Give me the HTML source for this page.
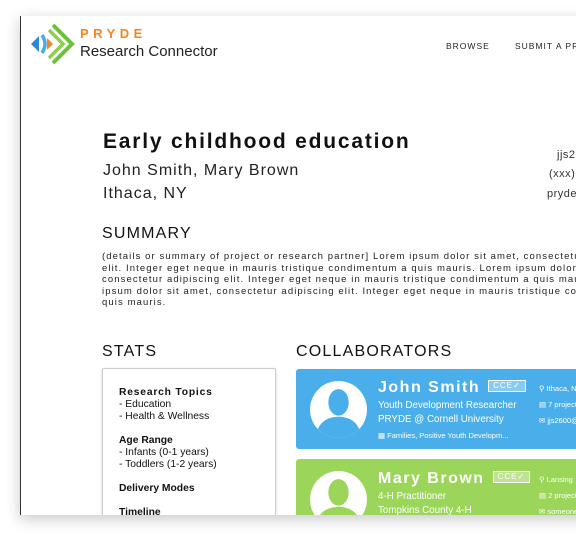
<!DOCTYPE html>
<html><head><meta charset="utf-8"><style>
*{margin:0;padding:0;box-sizing:border-box}
body{width:576px;height:540px;overflow:hidden;background:#fff;font-family:"Liberation Sans",sans-serif;position:relative;color:#111}
.frame{position:absolute;left:20px;top:16px;width:580px;height:499px;background:#fff;border-left:1.5px solid #333;box-shadow:0 4px 14px rgba(0,0,0,.22);overflow:hidden}
.a{position:absolute;white-space:nowrap}
.card{position:absolute;left:275px;width:320px;border-radius:3px;color:#fff}
.av{position:absolute;left:14px;width:57px;height:57px;border-radius:50%;background:#fff;overflow:hidden}
.badge{display:inline-block;font-size:8px;line-height:10px;border:1px solid #fff;background:rgba(255,255,255,.35);padding:0 4px;vertical-align:middle;margin-left:8px;letter-spacing:1px;font-weight:normal;position:relative;top:-2px}
</style></head><body>
<div class="frame">
<svg class="a" style="left:9px;top:7px" width="46" height="44" viewBox="0 0 46 44">
<polygon points="1,21 9,13 9,29" fill="#2f86d6"/>
<path d="M12,12 Q18,21 12,30" stroke="#4aa8e6" stroke-width="3.5" fill="none"/>
<polygon points="17,15 23,21 17,27" fill="#f7841e"/>
<path d="M19,7 L33,21 L19,35" stroke="#8cd04d" stroke-width="3.5" fill="none"/>
<path d="M23,2 L42,21 L23,40" stroke="#6cc23a" stroke-width="4" fill="none"/>
</svg>
<div class="a" style="left:59px;top:10px;font-size:13px;font-weight:bold;color:#f7841e;letter-spacing:4.5px">PRYDE</div>
<div class="a" style="left:59px;top:27px;font-size:15px;color:#222">Research Connector</div>
<div class="a" style="left:425px;top:25px;font-size:8.5px;letter-spacing:1px;color:#222">BROWSE</div>
<div class="a" style="left:494px;top:25px;font-size:8.5px;letter-spacing:1px;color:#222">SUBMIT A PROJECT</div>
<div class="a" style="left:82px;top:114px;font-size:21px;font-weight:bold;letter-spacing:1.8px;color:#111">Early childhood education</div>
<div class="a" style="left:82px;top:146px;font-size:16px;letter-spacing:1px;color:#222">John Smith, Mary Brown</div>
<div class="a" style="left:82px;top:169px;font-size:16px;letter-spacing:1px;color:#222">Ithaca, NY</div>
<div class="a" style="left:536px;top:133px;font-size:11px;color:#333;letter-spacing:.5px">jjs2600</div>
<div class="a" style="left:528px;top:152px;font-size:11px;color:#333;letter-spacing:.5px">(xxx)-xxx</div>
<div class="a" style="left:526px;top:172px;font-size:11px;color:#333;letter-spacing:.5px">pryde@</div>
<div class="a" style="left:81px;top:209px;font-size:16px;letter-spacing:1.2px;color:#111">SUMMARY</div>
<div class="a" style="left:81px;top:235px;font-size:9.5px;line-height:11.6px;letter-spacing:1.1px;color:#222">(details or summary of project or research partner] Lorem ipsum dolor sit amet, consectetur adipiscing<br>elit. Integer eget neque in mauris tristique condimentum a quis mauris. Lorem ipsum dolor sit amet,<br>consectetur adipiscing elit. Integer eget neque in mauris tristique condimentum a quis mauris. Lorem<br>ipsum dolor sit amet, consectetur adipiscing elit. Integer eget neque in mauris tristique condimentum a<br>quis mauris.</div>
<div class="a" style="left:81px;top:327px;font-size:16px;letter-spacing:1.2px">STATS</div>
<div class="a" style="left:275px;top:327px;font-size:16px;letter-spacing:1.2px">COLLABORATORS</div>
<div class="a" style="left:81px;top:352px;width:174px;height:160px;border:1px solid #ccc;border-radius:2px;box-shadow:0 1px 3px rgba(0,0,0,.15)">
<div class="a" style="left:16px;top:18px;font-size:10.3px;line-height:12px;color:#111"><b style="letter-spacing:.8px">Research Topics</b><br>- Education<br>- Health &amp; Wellness<br><br><b>Age Range</b><br>- Infants (0-1 years)<br>- Toddlers (1-2 years)<br><br><b>Delivery Modes</b><br><br><b>Timeline</b></div>
</div>
<div class="card" style="top:353px;height:80px;background:#4aaeea">
<div class="av" style="top:12px"><svg width="57" height="57" viewBox="0 0 56 56"><ellipse cx="28" cy="21" rx="10" ry="13" fill="#4aaeea"/><path d="M6,56 Q7,36 28,35 Q49,36 50,56Z" fill="#4aaeea"/></svg></div>
<div class="a" style="left:82px;top:10px;font-size:16px;font-weight:bold;letter-spacing:1.5px">John Smith<span class="badge">CCE✓</span></div>
<div class="a" style="left:82px;top:31px;font-size:9.8px">Youth Development Researcher</div>
<div class="a" style="left:82px;top:45px;font-size:9.8px">PRYDE @ Cornell University</div>
<div class="a" style="left:82px;top:62px;font-size:7.5px">▦ Families, Positive Youth Developm...</div>
<div class="a" style="left:243px;top:12px;font-size:7.5px;line-height:16px">⚲ Ithaca, NY<br>▤ 7 projects<br>✉ jjs2600@</div>
</div>
<div class="card" style="top:443px;height:80px;background:#9bd65a">
<div class="av" style="top:12px"><svg width="57" height="57" viewBox="0 0 56 56"><ellipse cx="28" cy="21" rx="10" ry="13" fill="#9bd65a"/><path d="M6,56 Q7,36 28,35 Q49,36 50,56Z" fill="#9bd65a"/></svg></div>
<div class="a" style="left:82px;top:11px;font-size:16px;font-weight:bold;letter-spacing:1.5px">Mary Brown<span class="badge">CCE✓</span></div>
<div class="a" style="left:82px;top:32px;font-size:9.8px">4-H Practitioner</div>
<div class="a" style="left:82px;top:46px;font-size:9.8px">Tompkins County 4-H</div>
<div class="a" style="left:243px;top:13px;font-size:7.5px;line-height:16px">⚲ Lansing<br>▤ 2 projects<br>✉ someone</div>
</div>
</div>
</body></html>
